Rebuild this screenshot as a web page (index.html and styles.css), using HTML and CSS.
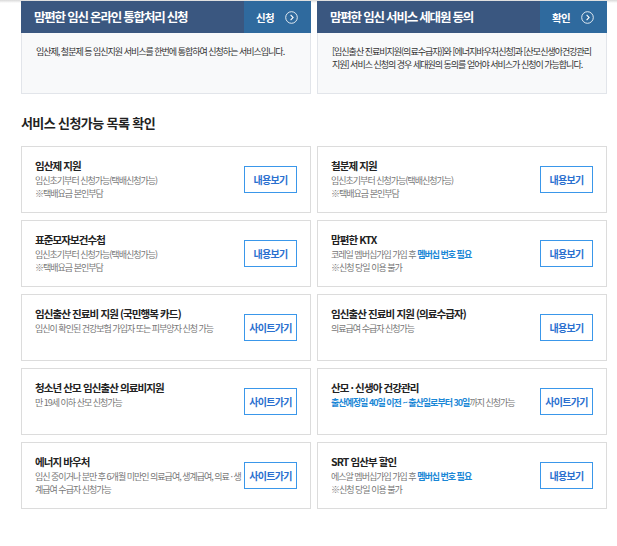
FILE: index.html
```html
<!DOCTYPE html>
<html lang="ko">
<head>
    <meta charset="UTF-8">
    <meta name="viewport" content="width=device-width, initial-scale=1.0">
    <title>맘편한 임신 서비스</title>
    <link rel="stylesheet" href="styles.css">
</head>
<body>
    <div class="page">
        <div class="promo-row">
            <div class="promo">
                <div class="promo-head">
                    <h2 class="promo-title">맘편한 임신 온라인 통합처리 신청</h2>
                    <a class="promo-link" href="#">신청
                        <svg class="arrow-icon" width="13" height="13" viewBox="0 0 13 13"><circle cx="6.5" cy="6.5" r="5.8" fill="none" stroke="#fff" stroke-opacity="0.85"/><path d="M5.6 3.9 L8.1 6.5 L5.6 9.1" fill="none" stroke="#fff" stroke-width="1.1"/></svg>
                    </a>
                </div>
                <p class="promo-desc">임산제, 철분제 등 임신지원 서비스를 한번에 통합하여 신청하는 서비스입니다.</p>
            </div>
            <div class="promo">
                <div class="promo-head">
                    <h2 class="promo-title">맘편한 임신 서비스 세대원 동의</h2>
                    <a class="promo-link" href="#">확인
                        <svg class="arrow-icon" width="13" height="13" viewBox="0 0 13 13"><circle cx="6.5" cy="6.5" r="5.8" fill="none" stroke="#fff" stroke-opacity="0.85"/><path d="M5.6 3.9 L8.1 6.5 L5.6 9.1" fill="none" stroke="#fff" stroke-width="1.1"/></svg>
                    </a>
                </div>
                <p class="promo-desc">[임신출산 진료비지원(의료수급자)]와 [에너지바우처신청]과 [산모신생아건강관리 지원] 서비스 신청의 경우 세대원의 동의를 얻어야 서비스가 신청이 가능합니다.</p>
            </div>
        </div>

        <h3 class="section-title">서비스 신청가능 목록 확인</h3>

        <ul class="service-list">
            <li class="service">
                <div class="service-info">
                    <strong class="service-name">임산제 지원</strong>
                    <p class="service-desc">임신초기부터 신청가능(택배신청가능)</p>
                    <p class="service-desc">※택배요금 본인부담</p>
                </div>
                <a class="service-btn" href="#">내용보기</a>
            </li>
            <li class="service">
                <div class="service-info">
                    <strong class="service-name">철분제 지원</strong>
                    <p class="service-desc">임신초기부터 신청가능(택배신청가능)</p>
                    <p class="service-desc">※택배요금 본인부담</p>
                </div>
                <a class="service-btn" href="#">내용보기</a>
            </li>
            <li class="service">
                <div class="service-info">
                    <strong class="service-name">표준모자보건수첩</strong>
                    <p class="service-desc">임신초기부터 신청가능(택배신청가능)</p>
                    <p class="service-desc">※택배요금 본인부담</p>
                </div>
                <a class="service-btn" href="#">내용보기</a>
            </li>
            <li class="service">
                <div class="service-info">
                    <strong class="service-name">맘편한 KTX</strong>
                    <p class="service-desc">코레일 멤버십가입 가입 후 <span class="hl">멤버십 번호 필요</span></p>
                    <p class="service-desc">※신청 당일 이용 불가</p>
                </div>
                <a class="service-btn" href="#">내용보기</a>
            </li>
            <li class="service">
                <div class="service-info">
                    <strong class="service-name">임신출산 진료비 지원 (국민행복 카드)</strong>
                    <p class="service-desc">임신이 확인된 건강보험 가입자 또는 피부양자 신청 가능</p>
                </div>
                <a class="service-btn" href="#">사이트가기</a>
            </li>
            <li class="service">
                <div class="service-info">
                    <strong class="service-name">임신출산 진료비 지원 (의료수급자)</strong>
                    <p class="service-desc">의료급여 수급자 신청가능</p>
                </div>
                <a class="service-btn" href="#">내용보기</a>
            </li>
            <li class="service">
                <div class="service-info">
                    <strong class="service-name">청소년 산모 임신출산 의료비지원</strong>
                    <p class="service-desc">만 19세 이하 산모 신청가능</p>
                </div>
                <a class="service-btn" href="#">사이트가기</a>
            </li>
            <li class="service">
                <div class="service-info">
                    <strong class="service-name">산모 · 신생아 건강관리</strong>
                    <p class="service-desc"><span class="hl">출산예정일 40일 이전 ~ 출산일로부터 30일</span>까지 신청가능</p>
                </div>
                <a class="service-btn" href="#">사이트가기</a>
            </li>
            <li class="service">
                <div class="service-info">
                    <strong class="service-name">에너지 바우처</strong>
                    <p class="service-desc">임신 중이거나 분만 후 6개월 미만인 의료급여, 생계급여, 의료 · 생계급여 수급자 신청가능</p>
                </div>
                <a class="service-btn" href="#">사이트가기</a>
            </li>
            <li class="service">
                <div class="service-info">
                    <strong class="service-name">SRT 임산부 할인</strong>
                    <p class="service-desc">에스알 멤버십가입 가입 후 <span class="hl">멤버십 번호 필요</span></p>
                    <p class="service-desc">※신청 당일 이용 불가</p>
                </div>
                <a class="service-btn" href="#">내용보기</a>
            </li>
        </ul>
    </div>
</body>
</html>
```

FILE: styles.css
```css
body {
    margin: 0;
    font-family: "Noto Sans CJK KR", "Noto Sans", sans-serif;
    color: #222;
    background: #fff linear-gradient(#d9d9d9, #fff 3px) no-repeat;
}

.page {
    width: 586px;
    margin-left: 21px;
    padding-top: 1px;
}

/* top promo cards */
.promo-row {
    display: grid;
    grid-template-columns: 290px 290px;
    gap: 6px;
}

.promo-head {
    display: flex;
    height: 32px;
    background-color: #3a5780;
}

.promo-title {
    flex: 1;
    margin: 0;
    padding-left: 13px;
    font-size: 12.5px;
    font-weight: bold;
    letter-spacing: -1.2px;
    line-height: 32px;
    color: #fff;
}

.promo-link {
    width: 67px;
    box-sizing: border-box;
    display: flex;
    align-items: center;
    justify-content: space-between;
    padding: 0 13px 0 12px;
    background-color: #2f6a9e;
    color: #fff;
    font-size: 10.5px;
    font-weight: bold;
    letter-spacing: -0.7px;
    text-decoration: none;
}

.arrow-icon {
    display: block;
}

.promo-desc {
    margin: 0;
    height: 61px;
    box-sizing: border-box;
    padding: 13px 12px 0 14px;
    border: 1px solid #e2e5ea;
    border-top: none;
    background-color: #f8f9fa;
    font-size: 9px;
    letter-spacing: -1px;
    line-height: 12.5px;
    color: #333;
}

.section-title {
    margin: 20px 0 14px;
    font-size: 13px;
    font-weight: bold;
    letter-spacing: -0.6px;
    line-height: 18px;
    color: #222;
}

/* service list */
.service-list {
    list-style: none;
    margin: 0;
    padding: 0;
    display: grid;
    grid-template-columns: 290px 290px;
    column-gap: 6px;
    row-gap: 7px;
}

.service {
    display: flex;
    height: 67px;
    box-sizing: border-box;
    padding: 0 13px;
    border: 1px solid #dcdcdc;
}

.service-info {
    flex: 1;
    min-width: 0;
    padding-top: 12px;
}

.service-name {
    display: block;
    font-size: 10.5px;
    letter-spacing: -0.9px;
    line-height: 14px;
    color: #222;
}

.service-desc {
    margin: 0;
    font-size: 9px;
    letter-spacing: -1px;
    line-height: 13.3px;
    color: #777;
}

.service-name + .service-desc {
    margin-top: 1px;
}

.hl {
    color: #1a87d6;
    font-weight: bold;
}

.service-btn {
    align-self: center;
    flex-shrink: 0;
    width: 53px;
    height: 27px;
    box-sizing: border-box;
    display: flex;
    align-items: center;
    justify-content: center;
    border: 1px solid #3a97ea;
    color: #2a70cf;
    font-size: 10px;
    font-weight: bold;
    letter-spacing: -0.7px;
    text-decoration: none;
}
```
